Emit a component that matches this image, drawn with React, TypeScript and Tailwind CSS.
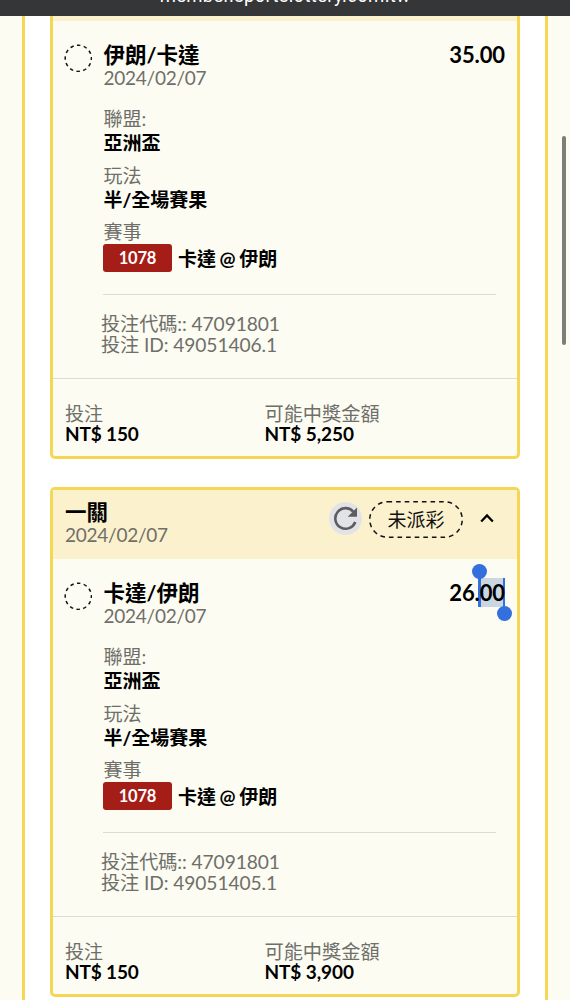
interface Bet {
  title: string;
  date: string;
  odds: string;
  league: string;
  market: string;
  eventNo: string;
  match: string;
  code: string;
  id: string;
  stake: string;
  payout: string;
  selected?: boolean;
}

const bets: Bet[] = [
  {
    title: '伊朗/卡達',
    date: '2024/02/07',
    odds: '35.00',
    league: '亞洲盃',
    market: '半/全場賽果',
    eventNo: '1078',
    match: '卡達 @ 伊朗',
    code: '47091801',
    id: '49051406.1',
    stake: 'NT$ 150',
    payout: 'NT$ 5,250',
  },
  {
    title: '卡達/伊朗',
    date: '2024/02/07',
    odds: '26.00',
    league: '亞洲盃',
    market: '半/全場賽果',
    eventNo: '1078',
    match: '卡達 @ 伊朗',
    code: '47091801',
    id: '49051405.1',
    stake: 'NT$ 150',
    payout: 'NT$ 3,900',
    selected: true,
  },
];

const RefreshIcon = () => (
  <svg width="33" height="33" viewBox="0 0 33 33" className="shrink-0">
    <circle cx="16.5" cy="16.5" r="16.5" fill="#e2e3e6" />
    <path
      d="M24.3 9.6A10.3 10.3 0 1 0 26.3 20"
      fill="none"
      stroke="#5c5d5f"
      strokeWidth="2.6"
    />
    <path d="M28 5.5v9.3h-9.3z" fill="#5c5d5f" />
  </svg>
);

const StatusPill = ({ label }: { label: string }) => (
  <div className="relative mt-0.5 ml-[7px] flex h-[37px] w-[94px] items-center justify-center">
    <svg className="absolute inset-0" width="94" height="37">
      <rect
        x="0.75"
        y="0.75"
        width="92.5"
        height="35.5"
        rx="17.75"
        fill="none"
        stroke="#111"
        strokeWidth="1.5"
        strokeDasharray="4.6 4"
      />
    </svg>
    <span className="text-[19px] leading-6 text-[#111]">{label}</span>
  </div>
);

const PendingCircle = () => (
  <svg width="28" height="28" viewBox="0 0 28 28" className="mt-[23px] shrink-0">
    <circle
      cx="14.3"
      cy="14.3"
      r="13.1"
      fill="none"
      stroke="#111"
      strokeWidth="1.5"
      strokeDasharray="3.5 3.36"
      strokeDashoffset="1.75"
    />
  </svg>
);

const Odds = ({ value, selected }: { value: string; selected?: boolean }) => (
  <div className="relative mt-[22px] h-6 text-[22px] leading-6 font-bold">
    {/* Text selection with its two drag handles */}
    {selected && (
      <div className="absolute -top-[3px] -right-px h-[29px] w-[26px] bg-[#cad7e3]">
        <span className="absolute top-0 -left-px h-full w-[2.5px] bg-[#336fdd]" />
        <span className="absolute -top-[14px] -left-[7px] size-[15px] rounded-full bg-[#336fdd]" />
        <span className="absolute top-0 right-0 h-full w-[2.5px] bg-[#336fdd]" />
        <span className="absolute -right-[6.5px] -bottom-[13.5px] size-[15px] rounded-full bg-[#336fdd]" />
      </div>
    )}
    <span className="relative -mr-px tracking-[-0.1px]">{value}</span>
  </div>
);

const BetCard = ({ bet }: { bet: Bet }) => (
  <div className="h-[510px] rounded-[5px] border-3 border-[#f6d755] bg-[#fcfcf2]">
    {/* Header */}
    <div className="flex h-[69px] items-start bg-[#fcf1cd] pl-3">
      <div className="mt-[10px] grow">
        <h2 className="text-[21.5px] leading-6 font-bold">一關</h2>
        <p className="text-[19px] leading-[22px] tracking-[-0.25px] text-[#6f6f6a]">{bet.date}</p>
      </div>
      <div className="mt-[10px] flex h-[37px] items-center pr-[23px]">
        <RefreshIcon />
        <StatusPill label="未派彩" />
        <svg width="14" height="10" viewBox="0 0 14 10" className="mb-px ml-[17px]">
          <path d="M1.2 8.5 7 2.5l5.8 6" fill="none" stroke="#000" strokeWidth="2.3" />
        </svg>
      </div>
    </div>

    {/* Selection details */}
    <div className="flex h-[357px] pr-[13px] pl-[11px]">
      <PendingCircle />
      <div className="ml-[11.5px] grow pt-[22px]">
        <h3 className="text-[21.5px] leading-6 font-bold">{bet.title}</h3>
        <p className="text-[19px] leading-[22px] tracking-[-0.25px] text-[#6f6f6a]">{bet.date}</p>

        <p className="mt-[18px] text-[19px] leading-6 text-[#6f6f6a]">聯盟:</p>
        <p className="text-[19px] leading-[23px] font-bold">{bet.league}</p>
        <p className="mt-[10px] text-[19px] leading-6 text-[#6f6f6a]">玩法</p>
        <p className="text-[19px] leading-[23px] font-bold">{bet.market}</p>
        <p className="mt-[9px] text-[19px] leading-6 text-[#6f6f6a]">賽事</p>
        <div className="-ml-[0.5px] flex items-center">
          <span className="h-7 w-[69px] rounded-[3px] bg-[#a41d17] text-center text-[16.5px] leading-[29px] font-bold tracking-[-0.2px] text-white">
            {bet.eventNo}
          </span>
          <span className="ml-1.5 pt-0.5 text-[19px] leading-[26px] font-bold [word-spacing:-1px]">
            {bet.match}
          </span>
        </div>

        <div className="mt-[22px] -ml-[0.5px] w-[393px] -mr-[48px] border-t border-[#dcdcd4]" />
        <div className="mt-[18px] -ml-[2.5px] text-[19.2px] leading-[21px] tracking-[-0.1px] text-[#6f6f6a]">
          <p>投注代碼:: {bet.code}</p>
          <p>投注 ID: {bet.id}</p>
        </div>
      </div>
      <Odds value={bet.odds} selected={bet.selected} />
    </div>

    {/* Stake and payout */}
    <div className="flex border-t border-[#dcdcd4] pt-6 pl-3">
      <div className="w-[199.5px]">
        <p className="text-[19px] leading-[21px] text-[#6f6f6a]">投注</p>
        <p className="text-[19px] leading-5 font-bold tracking-[-0.15px]">{bet.stake}</p>
      </div>
      <div>
        <p className="text-[19.2px] leading-[21px] text-[#6f6f6a]">可能中獎金額</p>
        <p className="text-[19px] leading-5 font-bold tracking-[-0.1px]">{bet.payout}</p>
      </div>
    </div>
  </div>
);

export default function App() {
  return (
    <main className="flex h-[1000px] w-[570px] flex-col overflow-hidden bg-[#fcfcf2] font-['Lato','Noto_Sans_CJK_TC',sans-serif] text-black">
      {/* Browser address bar */}
      <div className="z-10 h-4 shrink-0 bg-[#353638] text-center font-['Roboto',sans-serif] text-[18.5px] text-white">
        <p className="-mt-4 leading-6 tracking-[0.3px]">member.sportslottery.com.tw</p>
      </div>

      <div className="flex h-[984px] justify-end overflow-hidden">
        <div className="h-full w-[526px] border-x-3 border-[#f6d755] bg-white px-[25px]">
          <div className="-mt-[67px] flex flex-col gap-7">
            {bets.map((bet) => (
              <BetCard key={bet.id} bet={bet} />
            ))}
          </div>
        </div>
        {/* Page scrollbar */}
        <div className="w-[22px] pt-[120px] pl-[14px]">
          <div className="h-[209px] w-1 rounded-full bg-[#7d7d79]" />
        </div>
      </div>
    </main>
  );
}
